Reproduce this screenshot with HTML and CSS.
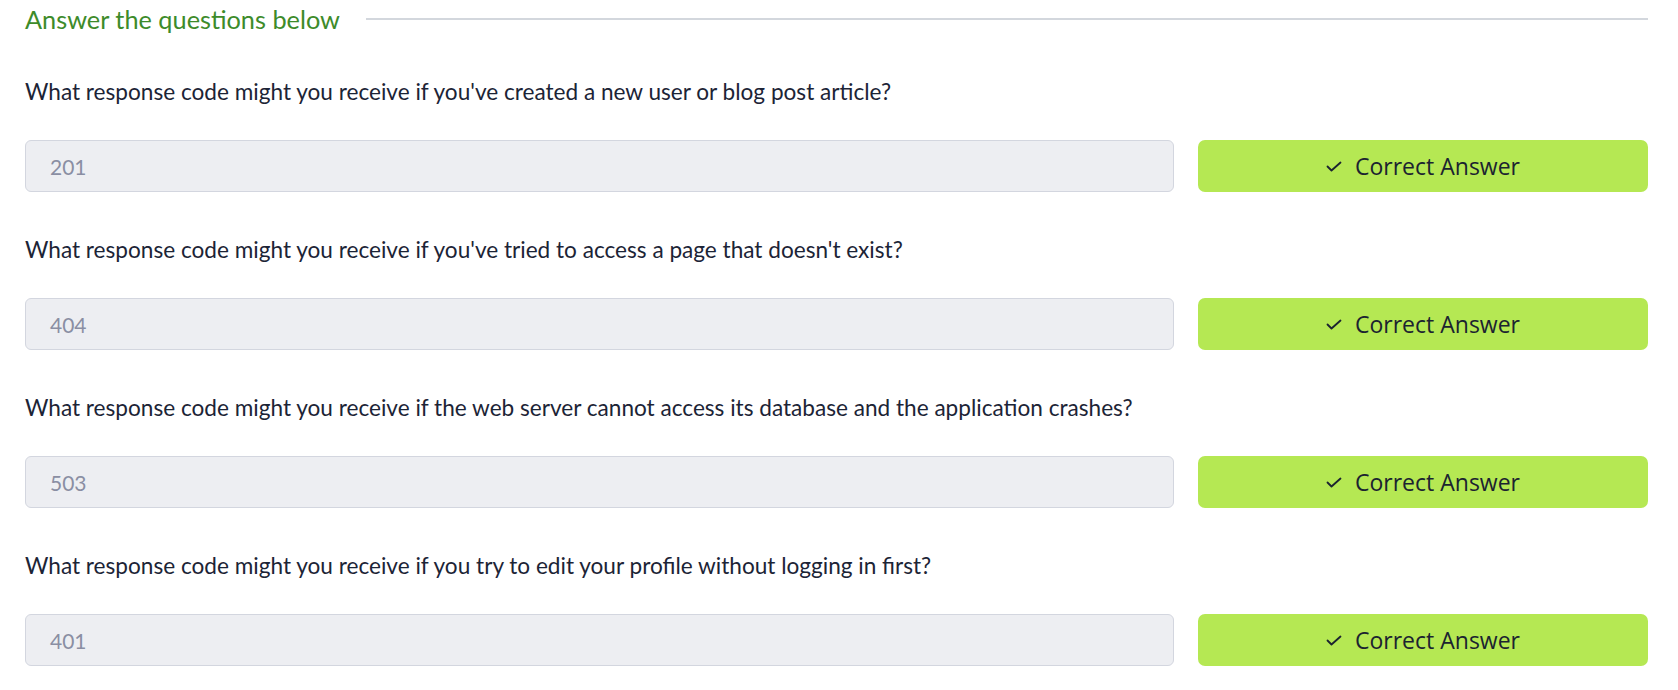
FILE: index.html
```html
<!DOCTYPE html>
<html>
<head>
<meta charset="utf-8">
<link rel="stylesheet" href="styles.css">
</head>
<body>
<div class="page">
  <div class="header">
    <span class="header-title">Answer the questions below</span>
    <span class="header-line"></span>
  </div>
  <div class="question">
    <p class="question-text">What response code might you receive if you've created a new user or blog post article?</p>
    <div class="answer-row">
      <div class="answer-input">201</div>
      <div class="answer-btn"><svg class="check" viewBox="0 0 16 11" width="16" height="11"><path d="M1.5 5.5l4 4 9-8" fill="none" stroke="#1b2330" stroke-width="1.8" stroke-linecap="round" stroke-linejoin="round"/></svg><span>Correct Answer</span></div>
    </div>
  </div>
  <div class="question">
    <p class="question-text">What response code might you receive if you've tried to access a page that doesn't exist?</p>
    <div class="answer-row">
      <div class="answer-input">404</div>
      <div class="answer-btn"><svg class="check" viewBox="0 0 16 11" width="16" height="11"><path d="M1.5 5.5l4 4 9-8" fill="none" stroke="#1b2330" stroke-width="1.8" stroke-linecap="round" stroke-linejoin="round"/></svg><span>Correct Answer</span></div>
    </div>
  </div>
  <div class="question">
    <p class="question-text">What response code might you receive if the web server cannot access its database and the application crashes?</p>
    <div class="answer-row">
      <div class="answer-input">503</div>
      <div class="answer-btn"><svg class="check" viewBox="0 0 16 11" width="16" height="11"><path d="M1.5 5.5l4 4 9-8" fill="none" stroke="#1b2330" stroke-width="1.8" stroke-linecap="round" stroke-linejoin="round"/></svg><span>Correct Answer</span></div>
    </div>
  </div>
  <div class="question">
    <p class="question-text">What response code might you receive if you try to edit your profile without logging in first?</p>
    <div class="answer-row">
      <div class="answer-input">401</div>
      <div class="answer-btn"><svg class="check" viewBox="0 0 16 11" width="16" height="11"><path d="M1.5 5.5l4 4 9-8" fill="none" stroke="#1b2330" stroke-width="1.8" stroke-linecap="round" stroke-linejoin="round"/></svg><span>Correct Answer</span></div>
    </div>
  </div>
</div>
</body>
</html>
```
FILE: styles.css
```css
html, body {
  margin: 0;
  padding: 0;
  background: #ffffff;
}
.page {
  padding: 0 30px 0 25px;
  font-family: Lato, "Open Sans", sans-serif;
  color: #1c2436;
}
.header {
  display: flex;
  align-items: center;
  height: 38px;
  gap: 26px;
}
.header-title {
  color: #3d8b2a;
  font-size: 25.3px;
  white-space: nowrap;
}
.header-line {
  flex: 1;
  height: 2px;
  background: #d3d7dd;
}
.question {
  margin-top: 39px;
}
.question + .question {
  margin-top: 43px;
}
.question-text {
  margin: 0;
  font-size: 22.6px;
  line-height: 30px;
}
.answer-row {
  display: flex;
  gap: 24px;
  margin-top: 33px;
}
.answer-input {
  flex: 1;
  box-sizing: border-box;
  height: 52px;
  border: 1px solid #d3d6df;
  border-radius: 6px;
  background: #edeef2;
  color: #8a8ea3;
  font-size: 21px;
  display: flex;
  align-items: center;
  padding-left: 24px;
}
.answer-btn {
  width: 450px;
  height: 52px;
  box-sizing: border-box;
  border-radius: 7px;
  background: #b5e853;
  display: flex;
  align-items: center;
  justify-content: center;
  gap: 13px;
  font-family: "Open Sans", sans-serif;
  font-size: 23px;
  color: #1b2330;
}
.check {
  display: block;
}
```
